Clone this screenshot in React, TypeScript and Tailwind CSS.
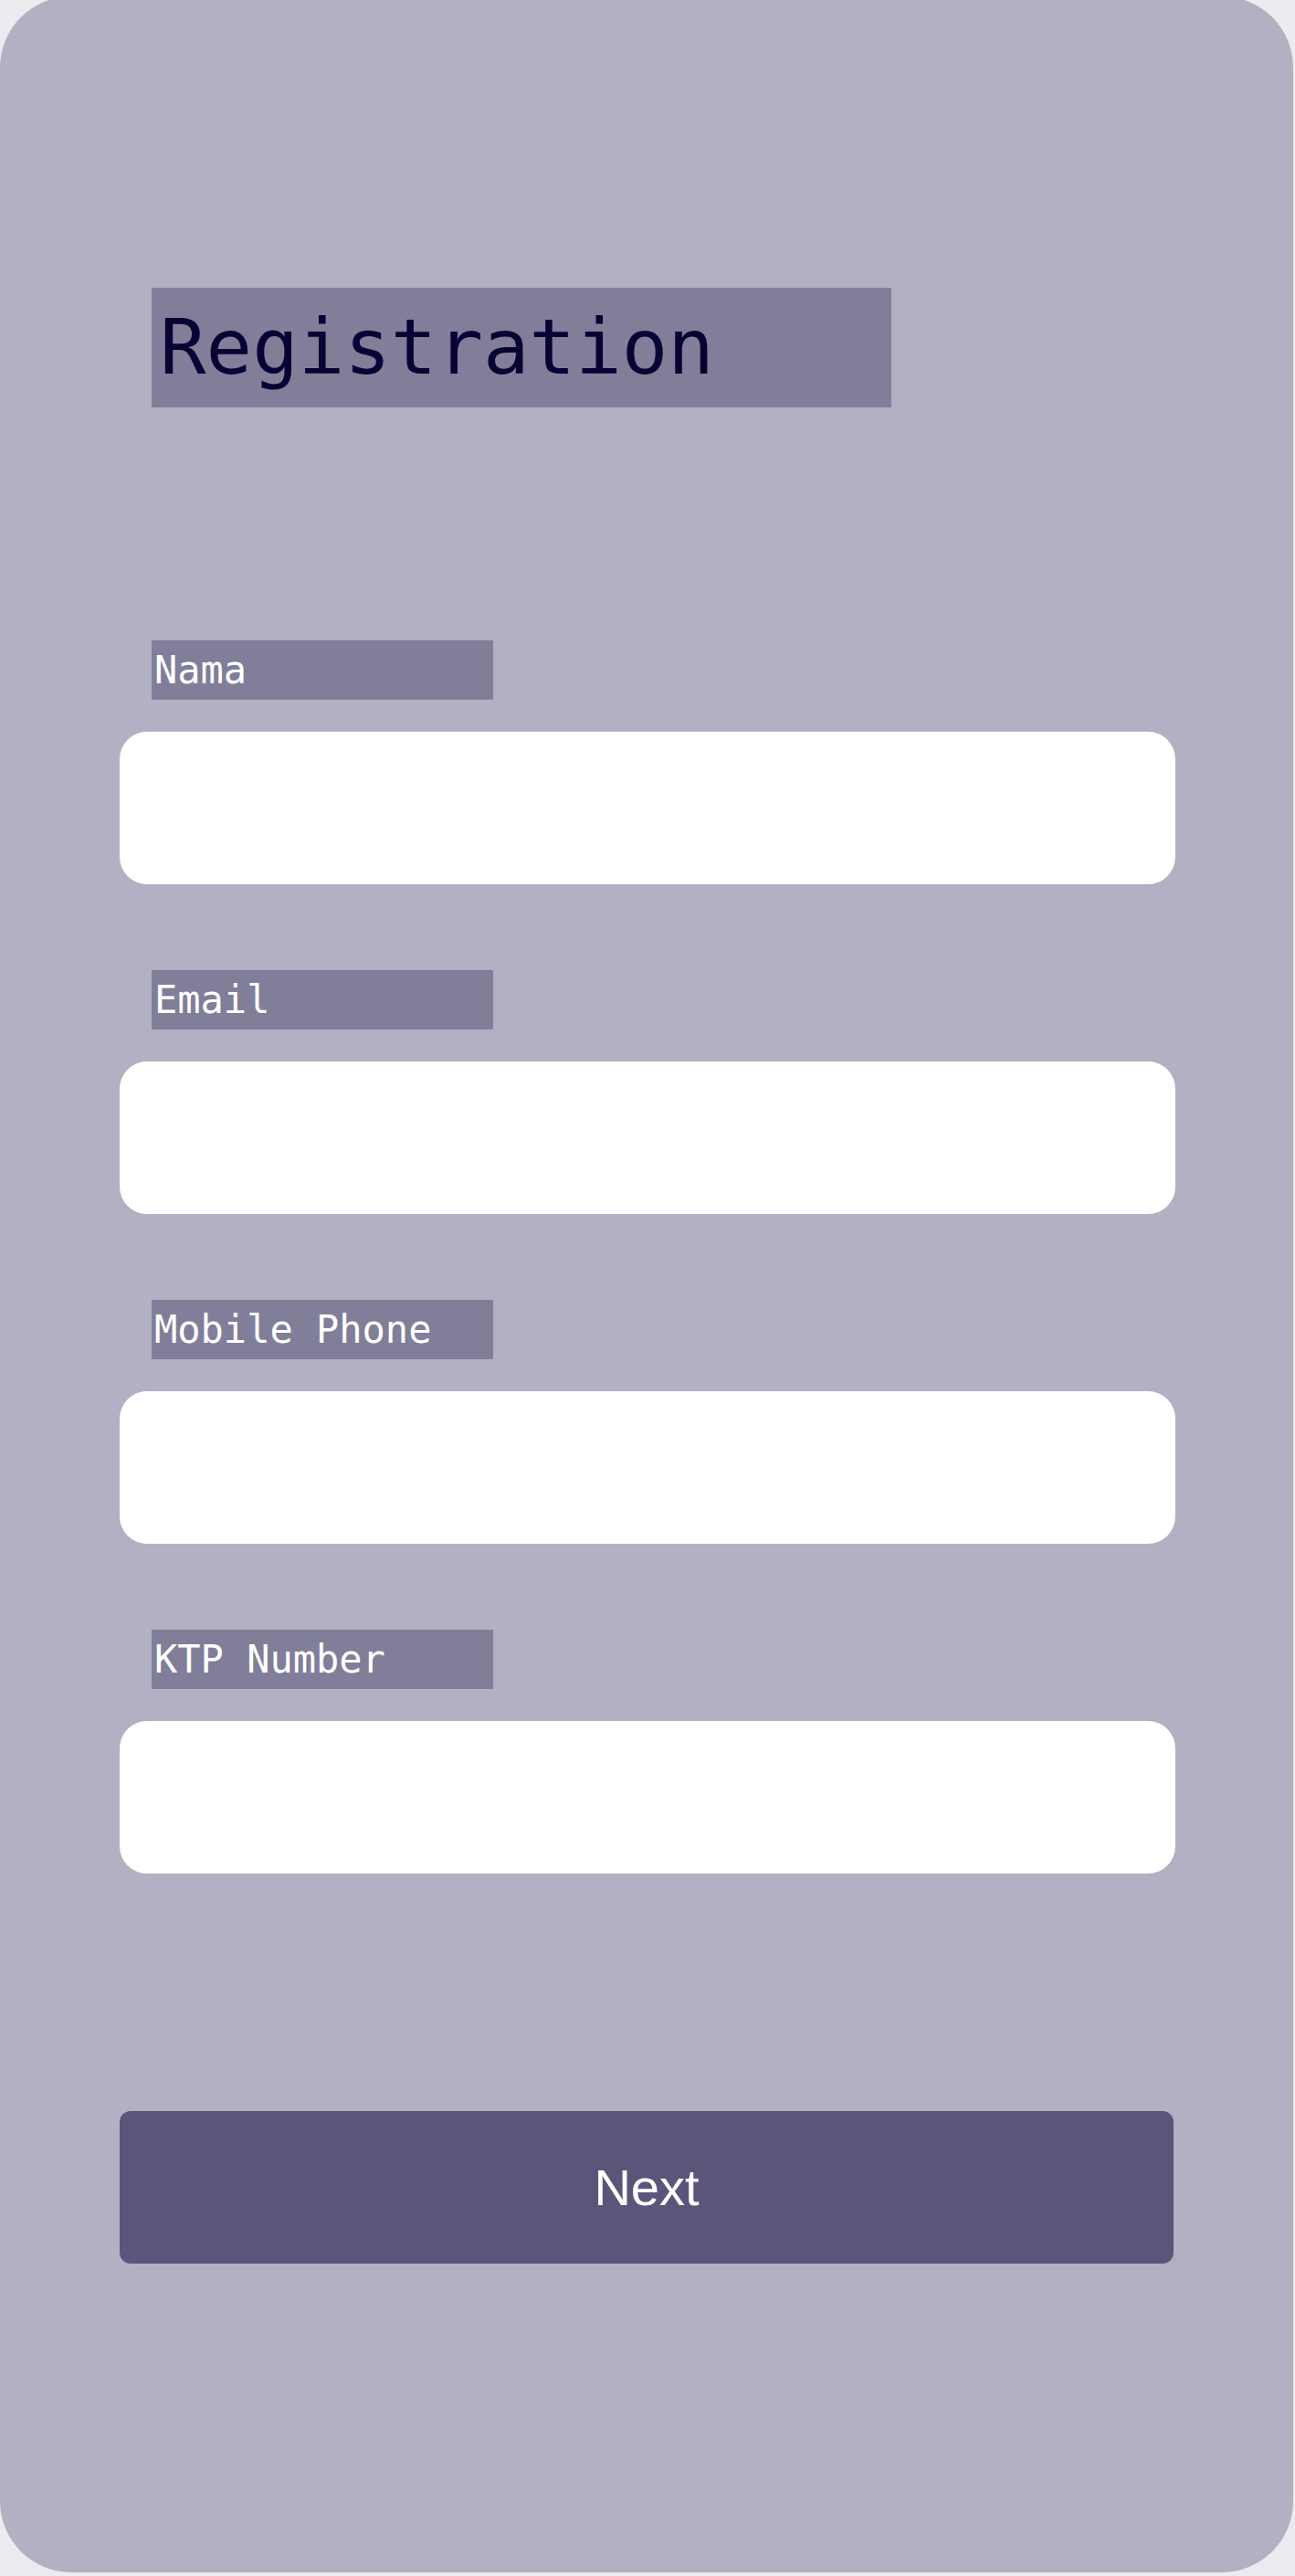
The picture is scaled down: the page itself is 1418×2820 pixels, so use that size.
const fields = ["Nama", "Email", "Mobile Phone", "KTP Number"];

function Field({ label }: { label: string }) {
  return (
    <div className="flex flex-col">
      <div className="ml-[166px] w-[374px] h-[65px] bg-[#817e9a] pl-[3px] text-[42px] leading-[65px] text-white font-['DejaVu_Sans_Mono',monospace] whitespace-nowrap">
        {label}
      </div>
      <input
        type="text"
        className="mt-[35px] ml-[131px] w-[1156px] h-[167px] rounded-[30px] bg-white px-8 text-[40px] outline-none"
      />
    </div>
  );
}

export default function App() {
  return (
    <div className="min-h-[2820px] w-full bg-[#ebebf0] overflow-hidden">
      <div className="mt-[-4px] w-[1416px] h-[2820px] rounded-[78px] bg-[#b2b1c3] pt-[319px] flex flex-col">
        <div className="ml-[166px] w-[810px] h-[131px] bg-[#817e9a] pl-[9px] text-[84px] leading-[131px] text-[#0a0033] font-['DejaVu_Sans_Mono',monospace]">
          Registration
        </div>

        <div className="mt-[255px] flex flex-col gap-[94px]">
          {fields.map((f) => (
            <Field key={f} label={f} />
          ))}
        </div>

        <button className="mt-[260px] ml-[131px] w-[1154px] h-[167px] rounded-[12px] bg-[#5a5679] text-white text-[56px] font-['Liberation_Sans',Arial,sans-serif]">
          Next
        </button>
      </div>
    </div>
  );
}
